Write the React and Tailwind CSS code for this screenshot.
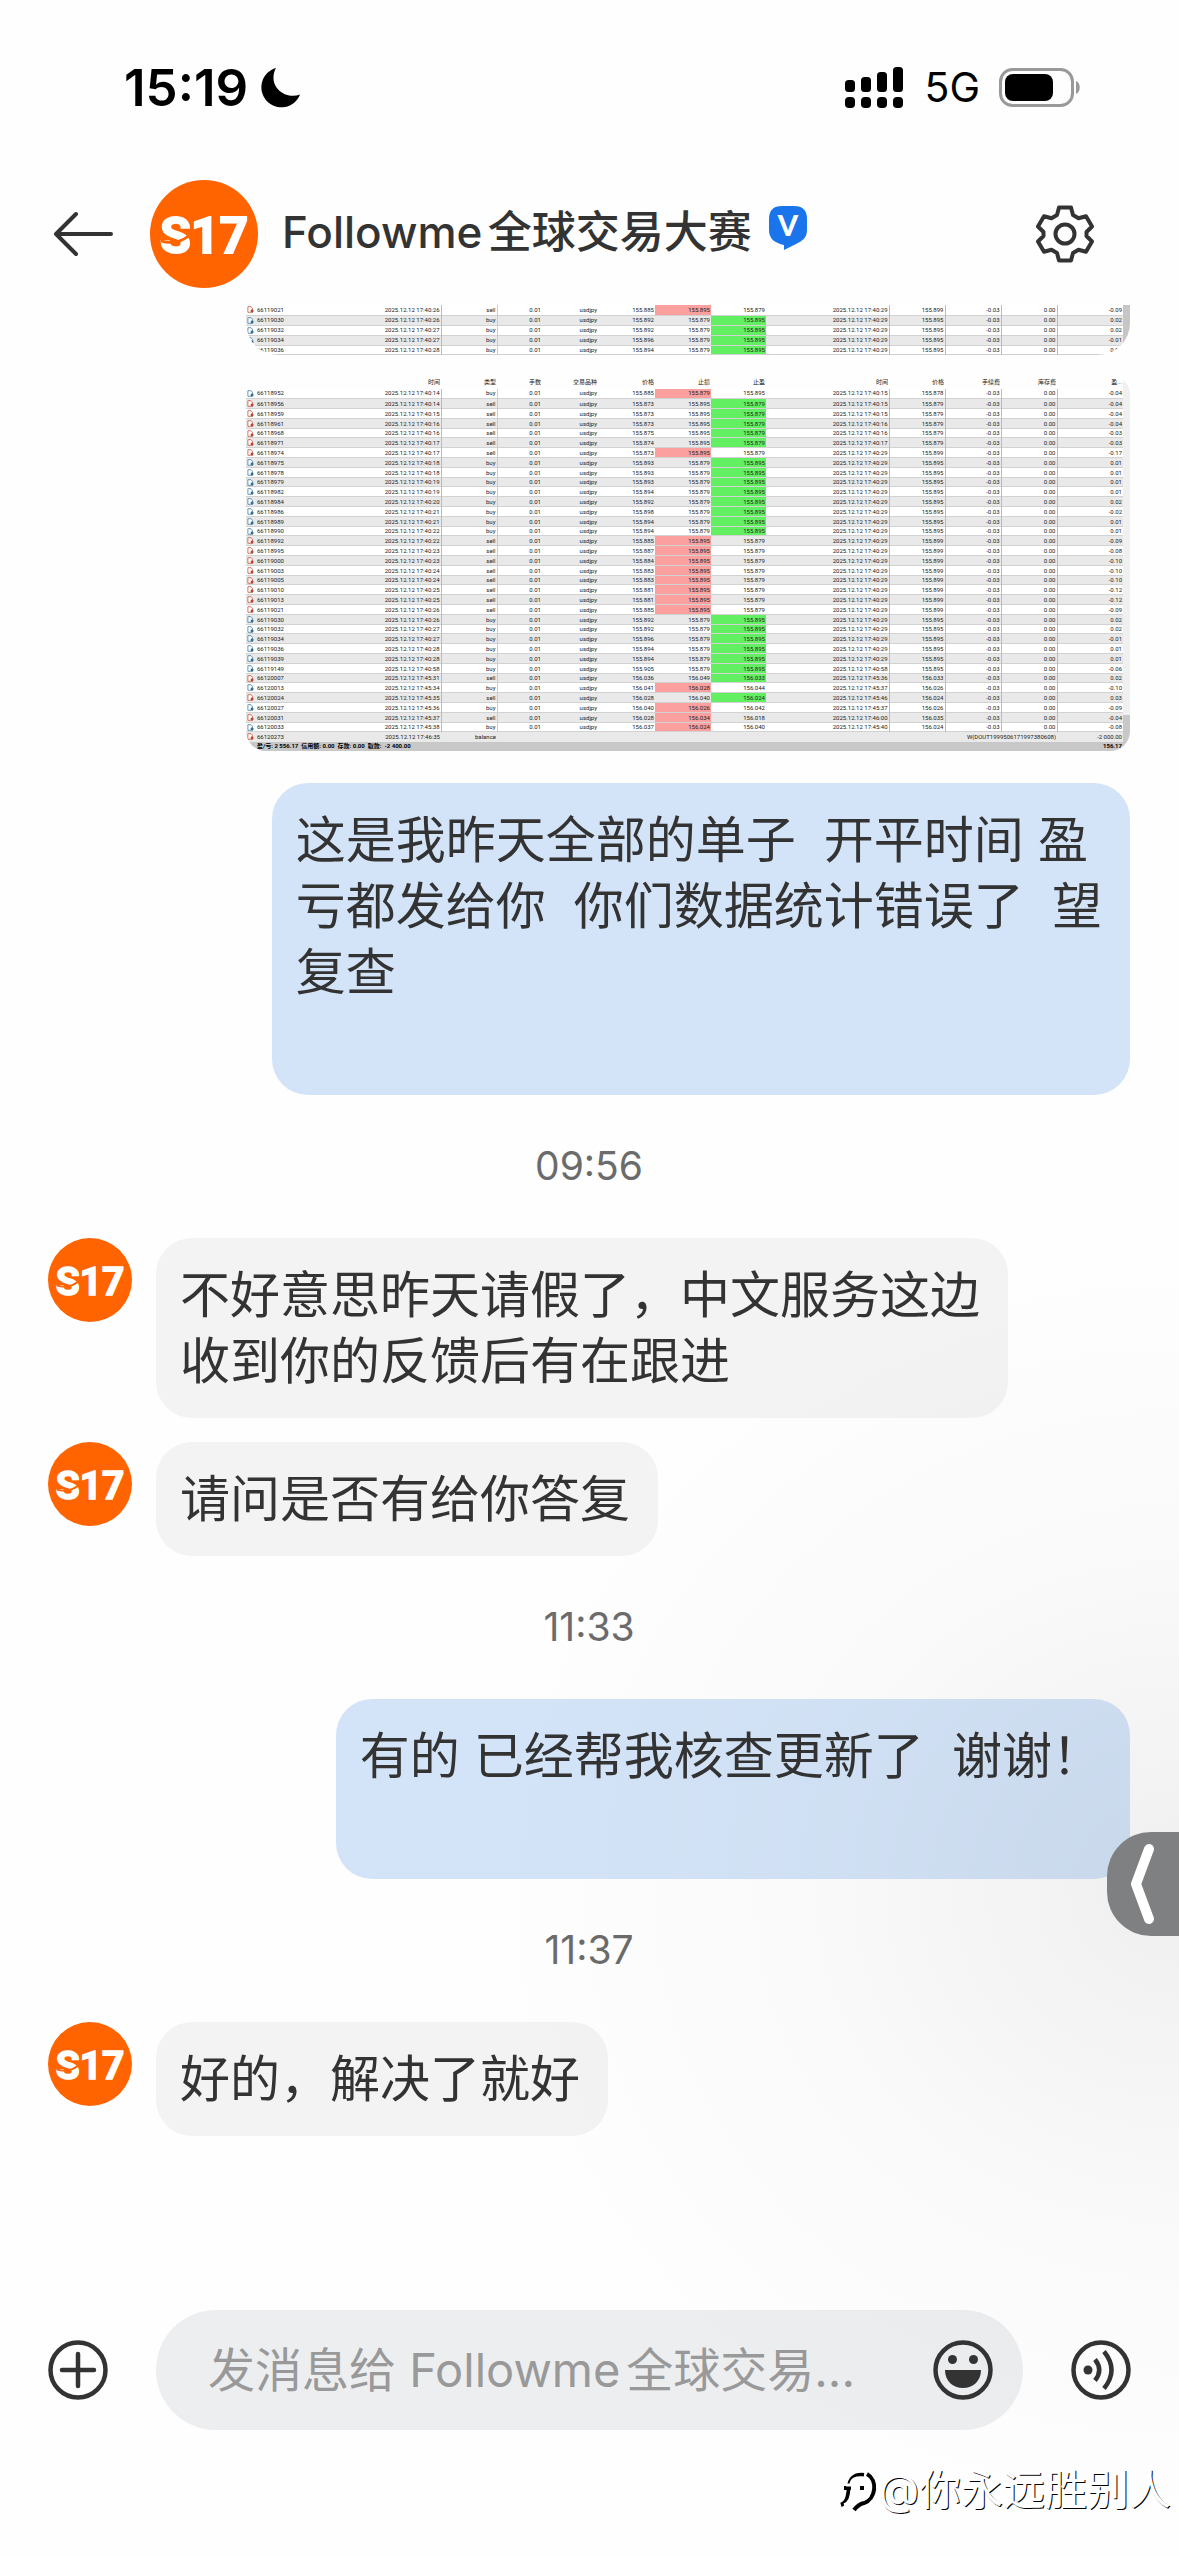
const COLUMNS = [
  'w-[72px]',
  'w-[123px]',
  'w-[56px]',
  'w-[45px]',
  'w-[56px]',
  'w-[57px]',
  'w-[56px]',
  'w-[55px]',
  'w-[123px]',
  'w-[56px]',
  'w-[56px]',
  'w-[56px]',
  'w-[66px]',
];

// order, open time, type, open price, s/l, t/p, close time, close price, profit, hit
const EARLY_ORDERS = [
  ['66119021', '17:40:26', 'sell', '155.885', '155.895', '155.879', '17:40:29', '155.899', '-0.09', 'sl'],
  ['66119030', '17:40:26', 'buy', '155.892', '155.879', '155.895', '17:40:29', '155.895', '0.02', 'tp'],
  ['66119032', '17:40:27', 'buy', '155.892', '155.879', '155.895', '17:40:29', '155.895', '0.02', 'tp'],
  ['66119034', '17:40:27', 'buy', '155.896', '155.879', '155.895', '17:40:29', '155.895', '-0.01', 'tp'],
  ['66119036', '17:40:28', 'buy', '155.894', '155.879', '155.895', '17:40:29', '155.895', '0.01', 'tp'],
];

const ORDERS = [
  ['66118952', '17:40:14', 'buy', '155.885', '155.879', '155.895', '17:40:15', '155.878', '-0.04', 'sl'],
  ['66118956', '17:40:14', 'sell', '155.873', '155.895', '155.879', '17:40:15', '155.879', '-0.04', 'tp'],
  ['66118959', '17:40:15', 'sell', '155.873', '155.895', '155.879', '17:40:15', '155.879', '-0.04', 'tp'],
  ['66118961', '17:40:16', 'sell', '155.873', '155.895', '155.879', '17:40:16', '155.879', '-0.04', 'tp'],
  ['66118968', '17:40:16', 'sell', '155.875', '155.895', '155.879', '17:40:16', '155.879', '-0.03', 'tp'],
  ['66118971', '17:40:17', 'sell', '155.874', '155.895', '155.879', '17:40:17', '155.879', '-0.03', 'tp'],
  ['66118974', '17:40:17', 'sell', '155.873', '155.895', '155.879', '17:40:29', '155.899', '-0.17', 'sl'],
  ['66118975', '17:40:18', 'buy', '155.893', '155.879', '155.895', '17:40:29', '155.895', '0.01', 'tp'],
  ['66118978', '17:40:18', 'buy', '155.893', '155.879', '155.895', '17:40:29', '155.895', '0.01', 'tp'],
  ['66118979', '17:40:19', 'buy', '155.893', '155.879', '155.895', '17:40:29', '155.895', '0.01', 'tp'],
  ['66118982', '17:40:19', 'buy', '155.894', '155.879', '155.895', '17:40:29', '155.895', '0.01', 'tp'],
  ['66118984', '17:40:20', 'buy', '155.892', '155.879', '155.895', '17:40:29', '155.895', '0.02', 'tp'],
  ['66118986', '17:40:21', 'buy', '155.898', '155.879', '155.895', '17:40:29', '155.895', '-0.02', 'tp'],
  ['66118989', '17:40:21', 'buy', '155.894', '155.879', '155.895', '17:40:29', '155.895', '0.01', 'tp'],
  ['66118990', '17:40:22', 'buy', '155.894', '155.879', '155.895', '17:40:29', '155.895', '0.01', 'tp'],
  ['66118992', '17:40:22', 'sell', '155.885', '155.895', '155.879', '17:40:29', '155.899', '-0.09', 'sl'],
  ['66118995', '17:40:23', 'sell', '155.887', '155.895', '155.879', '17:40:29', '155.899', '-0.08', 'sl'],
  ['66119000', '17:40:23', 'sell', '155.884', '155.895', '155.879', '17:40:29', '155.899', '-0.10', 'sl'],
  ['66119003', '17:40:24', 'sell', '155.883', '155.895', '155.879', '17:40:29', '155.899', '-0.10', 'sl'],
  ['66119005', '17:40:24', 'sell', '155.883', '155.895', '155.879', '17:40:29', '155.899', '-0.10', 'sl'],
  ['66119010', '17:40:25', 'sell', '155.881', '155.895', '155.879', '17:40:29', '155.899', '-0.12', 'sl'],
  ['66119013', '17:40:25', 'sell', '155.881', '155.895', '155.879', '17:40:29', '155.899', '-0.12', 'sl'],
  ['66119021', '17:40:26', 'sell', '155.885', '155.895', '155.879', '17:40:29', '155.899', '-0.09', 'sl'],
  ['66119030', '17:40:26', 'buy', '155.892', '155.879', '155.895', '17:40:29', '155.895', '0.02', 'tp'],
  ['66119032', '17:40:27', 'buy', '155.892', '155.879', '155.895', '17:40:29', '155.895', '0.02', 'tp'],
  ['66119034', '17:40:27', 'buy', '155.896', '155.879', '155.895', '17:40:29', '155.895', '-0.01', 'tp'],
  ['66119036', '17:40:28', 'buy', '155.894', '155.879', '155.895', '17:40:29', '155.895', '0.01', 'tp'],
  ['66119039', '17:40:28', 'buy', '155.894', '155.879', '155.895', '17:40:29', '155.895', '0.01', 'tp'],
  ['66119149', '17:40:58', 'buy', '155.905', '155.879', '155.895', '17:40:58', '155.895', '-0.06', 'tp'],
  ['66120007', '17:45:31', 'sell', '156.036', '156.049', '156.033', '17:45:36', '156.033', '0.02', 'tp'],
  ['66120013', '17:45:34', 'buy', '156.041', '156.028', '156.044', '17:45:37', '156.026', '-0.10', 'sl'],
  ['66120024', '17:45:35', 'sell', '156.028', '156.040', '156.024', '17:45:46', '156.024', '0.03', 'tp'],
  ['66120027', '17:45:36', 'buy', '156.040', '156.026', '156.042', '17:45:37', '156.026', '-0.09', 'sl'],
  ['66120031', '17:45:37', 'sell', '156.028', '156.034', '156.018', '17:46:00', '156.035', '-0.04', 'sl'],
  ['66120033', '17:45:38', 'buy', '156.037', '156.024', '156.040', '17:45:40', '156.024', '-0.08', 'sl'],
];

const HEADINGS = ['', '时间', '类型', '手数', '交易品种', '价格', '止损', '止盈', '时间', '价格', '手续费', '库存费', '盈...'];

function OrderIcon({ type }) {
  const color = type === 'buy' ? '#2f6f95' : '#b8442c';
  return (
    <svg viewBox="0 0 8 8" className="h-[7px] w-[7px] shrink-0">
      <path d="M1 .8h3.6l1.6 1.8v4.6H1z" fill="#fff" stroke={color} strokeWidth=".8" />
      <circle cx="5.8" cy="5.8" r="1.7" fill={color} />
    </svg>
  );
}

function OrderRow({ order, index }) {
  const [id, opened, type, price, sl, tp, closed, closePrice, profit, hit] = order;
  const shade = index % 2 === 1 ? 'bg-[#e9e9e9]' : 'bg-white';
  // every fifth row is a pixel shorter
  const height = index % 5 === 4 ? 'h-[9px]' : 'h-[10px]';
  return (
    <tr className={`border-b border-[#d2d2d2] ${shade} ${height}`}>
      <td className="text-left">
        <span className="flex items-center gap-[3px] pl-px">
          <OrderIcon type={type} />
          {id}
        </span>
      </td>
      <td className="border-r border-[#bbb]">2025.12.12 {opened}</td>
      <td className="border-r border-[#ccc]">{type}</td>
      <td>0.01</td>
      <td>usdjpy</td>
      <td>{price}</td>
      <td className={hit === 'sl' ? 'bg-[#fb9f9f]' : ''}>{sl}</td>
      <td className={hit === 'tp' ? 'bg-[#62ef62]' : ''}>{tp}</td>
      <td className="border-r border-[#bbb]">2025.12.12 {closed}</td>
      <td className="border-r border-[#bbb]">{closePrice}</td>
      <td className="border-r border-[#bbb]">-0.03</td>
      <td className="border-r border-[#bbb]">0.00</td>
      <td>{profit}</td>
    </tr>
  );
}

function Columns() {
  return (
    <colgroup>
      {COLUMNS.map((width, i) => (
        <col key={i} className={width} />
      ))}
    </colgroup>
  );
}

const tableText =
  "flex-1 table-fixed border-collapse text-right text-[6px] leading-none text-[#222] [&_td]:pr-px [&_th]:pr-px font-['Roboto','Noto_Sans_CJK_SC',sans-serif]";

function TradeHistory() {
  return (
    <div className="flex w-[884px] flex-col gap-5 self-end">
      <div className="flex items-stretch overflow-hidden rounded-b-[32px]">
        <table className={tableText}>
          <Columns />
          <tbody>
            {EARLY_ORDERS.map((order, i) => (
              <OrderRow key={order[0]} order={order} index={i} />
            ))}
          </tbody>
        </table>
        <div className="w-[7px] bg-[#c6c6c6]" />
      </div>

      <div className="flex items-stretch overflow-hidden rounded-[20px]">
        <table className={tableText}>
          <Columns />
          <thead>
            <tr className="h-[14px]">
              {HEADINGS.map((heading, i) => (
                <th key={i} className="font-normal">{heading}</th>
              ))}
            </tr>
          </thead>
          <tbody>
            {ORDERS.map((order, i) => (
              <OrderRow key={order[0]} order={order} index={i} />
            ))}
            <tr className="h-[10px] bg-[#e9e9e9]">
              <td className="text-left">
                <span className="flex items-center gap-[3px] pl-px">
                  <OrderIcon type="balance" />
                  66120273
                </span>
              </td>
              <td>2025.12.12 17:46:35</td>
              <td>balance</td>
              <td colSpan={9}>W(DOUT1999506171997380608)</td>
              <td>-2 000.00</td>
            </tr>
          </tbody>
          <tfoot>
            <tr className="h-[9px] bg-[#c8c8c8] font-bold text-black">
              <td colSpan={12} className="text-left">
                <span className="whitespace-pre pl-[11px]">盈/亏: 2 556.17  信用额: 0.00  存款: 0.00  取款:  -2 400.00</span>
              </td>
              <td>156.17</td>
            </tr>
          </tfoot>
        </table>
        <div className="flex w-[7px] flex-col justify-end bg-[#f0f0f0]">
          <div className="h-9 bg-[#c8c8c8]" />
        </div>
      </div>
    </div>
  );
}

function Avatar({ className }) {
  return (
    <svg viewBox="0 0 108 108" className={`shrink-0 ${className}`} role="img" aria-label="S17">
      <circle cx="54" cy="54" r="54" fill="#ff6400" />
      <text
        x="54"
        y="73"
        textAnchor="middle"
        fontSize="50"
        fontWeight="700"
        fill="#fff"
        stroke="#fff"
        strokeWidth="2"
        className="font-['Roboto',sans-serif]"
      >
        S17
      </text>
      <path d="M11 61c9 3 21 2 31-8" fill="none" stroke="#ff6400" strokeWidth="2.5" />
    </svg>
  );
}

function StatusBar() {
  return (
    <div className="flex h-44 items-center justify-between pl-[124px] pr-[98px] text-black">
      <div className="flex items-center gap-3">
        <span className="text-[51px] font-semibold">15:19</span>
        <svg viewBox="0 0 40 40" className="h-10 w-10">
          <path d="M16 0A20 20 0 1 0 40 26.5C27 31 13 22 13.5 9 13.6 5.5 14.5 2.5 16 0z" fill="currentColor" />
        </svg>
      </div>
      <div className="flex items-center gap-[19px]">
        <svg viewBox="0 0 60 42" className="h-[42px] w-[60px]" fill="currentColor">
          <rect x="0" y="13" width="10" height="12" rx="3.5" />
          <rect x="16" y="10" width="10" height="15" rx="3.5" />
          <rect x="32" y="5" width="10" height="20" rx="3.5" />
          <rect x="48" y="0" width="10" height="25" rx="3.5" />
          <rect x="0" y="30" width="10" height="11" rx="4" />
          <rect x="16" y="30" width="10" height="11" rx="4" />
          <rect x="32" y="30" width="10" height="11" rx="4" />
          <rect x="48" y="30" width="10" height="11" rx="4" />
        </svg>
        <span className="text-[41px]">5G</span>
        <svg viewBox="0 0 82 40" className="h-10 w-[82px]">
          <rect x="1.5" y="1.5" width="72" height="36" rx="12" fill="none" stroke="#999" strokeWidth="3" />
          <rect x="6" y="6" width="48" height="27" rx="8" fill="#000" />
          <path d="M77 13c5 2 5 11 0 13z" fill="#999" />
        </svg>
      </div>
    </div>
  );
}

function ChatHeader() {
  return (
    <header className="flex items-center px-[52px] pb-[17px] pt-1 text-[#333]">
      <button aria-label="返回" className="mr-9">
        <svg viewBox="0 0 62 46" className="h-[46px] w-[62px]" fill="none" stroke="currentColor" strokeWidth="4" strokeLinecap="round" strokeLinejoin="round">
          <path d="M59 23H4M24 3L4 23l20 20" />
        </svg>
      </button>
      <Avatar className="h-[108px] w-[108px]" />
      <div className="flex flex-1 items-center gap-4 pb-1 pl-6">
        <h1 className="text-[44px] font-medium leading-none [text-autospace:normal]">Followme全球交易大赛</h1>
        <svg viewBox="0 0 40 46" className="mb-2 h-[46px] w-10">
          <path d="M14 1h12q13 0 13 13v11c0 8-5 11-11 14-4 2-8 4-12 6v-5C7 38 1 34 1 25V14Q1 1 14 1z" fill="#1a74ec" />
          <text x="20" y="31" textAnchor="middle" fontSize="29" fontWeight="900" fill="#fff" className="font-['Lato',sans-serif]">
            V
          </text>
        </svg>
      </div>
      <button aria-label="设置" className="mr-8">
        <svg viewBox="0 0 60 60" className="h-[60px] w-[60px]" fill="none" stroke="currentColor" strokeWidth="4" strokeLinejoin="round">
          <path d="M24 3.5h12l2 7.5 5.5 3.2 7.5-2 6 10.3-5.5 5.5v4l5.5 5.5-6 10.3-7.5-2-5.5 3.2-2 7.5H24l-2-7.5-5.5-3.2-7.5 2L3 37.5 8.5 32v-4L3 22.5l6-10.3 7.5 2L22 11z" />
          <circle cx="30" cy="30" r="9.5" />
        </svg>
      </button>
    </header>
  );
}

function Time({ children }) {
  return (
    <time className="flex h-[143px] items-center justify-center text-[39px] text-[#6b6b6b]">{children}</time>
  );
}

const bubble = 'whitespace-pre rounded-[36px] py-6 pl-6 pr-7 text-[50px] leading-[66px] text-[#333]';

function Received({ children }) {
  return (
    <div className="flex items-start gap-6">
      <Avatar className="h-[84px] w-[84px]" />
      <p className={`${bubble} bg-[#f3f3f3]`}>{children}</p>
    </div>
  );
}

function Sent({ children }) {
  return <p className={`${bubble} self-end bg-[#d4e4f8]`}>{children}</p>;
}

function Composer() {
  return (
    <footer className="flex items-center gap-12 px-12 pb-[126px] text-[#333]">
      <button aria-label="更多">
        <svg viewBox="0 0 60 60" className="h-[60px] w-[60px]" fill="none" stroke="currentColor" strokeWidth="4.5" strokeLinecap="round">
          <circle cx="30" cy="30" r="27.5" />
          <path d="M30 14v32M14 30h32" />
        </svg>
      </button>
      <label className="flex h-[120px] min-w-0 flex-1 items-center rounded-full bg-[#edeef0] pl-[52px] pr-[30px]">
        <input
          type="text"
          aria-label="消息"
          placeholder="发消息给 Followme全球交易..."
          className="min-w-0 flex-1 text-[47px] outline-none [text-autospace:normal] placeholder:text-[#999]"
        />
        <button aria-label="表情">
          <svg viewBox="0 0 60 60" className="h-[60px] w-[60px]" fill="currentColor">
            <circle cx="30" cy="30" r="27.5" fill="none" stroke="currentColor" strokeWidth="4.5" />
            <circle cx="19.5" cy="19.5" r="4.5" />
            <circle cx="40.5" cy="19.5" r="4.5" />
            <path d="M12 30h36c0 11-8 18-18 18s-18-7-18-18z" />
          </svg>
        </button>
      </label>
      <button aria-label="语音">
        <svg viewBox="0 0 60 60" className="h-[60px] w-[60px]" fill="none" stroke="currentColor" strokeWidth="4.5">
          <circle cx="30" cy="30" r="27.5" />
          <circle cx="17" cy="30" r="4.5" fill="currentColor" stroke="none" />
          <path d="M24 19.5q8.5 10.5 0 21M33 11.5q15 18.5 0 37" />
        </svg>
      </button>
    </footer>
  );
}

export default function App() {
  return (
    <div className="relative flex min-h-screen flex-col overflow-hidden bg-[#fefefe] font-['Inter','Noto_Sans_CJK_SC',sans-serif]">
      <StatusBar />
      <ChatHeader />

      <main className="flex flex-1 flex-col pl-12 pr-[49px]">
        <TradeHistory />
        <div className="mt-8 flex flex-col">
          <Sent>{'这是我昨天全部的单子  开平时间 盈\n亏都发给你  你们数据统计错误了  望\n复查\n '}</Sent>
        </div>
        <Time>09:56</Time>
        <div className="flex flex-col gap-6">
          <Received>{'不好意思昨天请假了，中文服务这边\n收到你的反馈后有在跟进'}</Received>
          <Received>请问是否有给你答复</Received>
        </div>
        <Time>11:33</Time>
        <Sent>{'有的 已经帮我核查更新了  谢谢！\n '}</Sent>
        <Time>11:37</Time>
        <Received>好的，解决了就好</Received>
      </main>

      <Composer />

      {/* Soft shade behind the side handle */}
      <div className="pointer-events-none absolute inset-0 bg-[radial-gradient(ellipse_700px_640px_at_100%_74%,rgba(0,0,0,0.06),rgba(0,0,0,0.02)_50%,transparent)]" />

      <button aria-label="展开" className="absolute right-0 top-[1832px] flex h-[104px] w-[72px] items-center justify-center rounded-l-[44px] bg-[#7f8082]">
        <svg viewBox="0 0 28 82" className="h-[82px] w-7" fill="none" stroke="#fff" strokeWidth="10" strokeLinecap="round" strokeLinejoin="round">
          <path d="M20 6L7 41l13 35" />
        </svg>
      </button>

      <div className="absolute bottom-9 right-2 flex items-center text-[42px] text-white">
        <svg viewBox="0 0 38 44" className="h-11 w-[38px]" fill="none">
          <path d="M1 37c6-2 7-8 8-18M4 20h5c0-9 5-14 15-13M27 6c11 6 9 25-3 29-4 1-7 3-10 7M20 20h4" stroke="#000" strokeWidth="4" />
          <path d="M4 37c6-2 7-8 8-15M6 17h5c0-6 5-8 13-7M24 9c8 5 8 19-1 23" stroke="#fff" strokeWidth="3" />
        </svg>
        <span className="leading-[60px] [text-shadow:1px_1px_0_#000]">@你永远胜别人</span>
      </div>
    </div>
  );
}
